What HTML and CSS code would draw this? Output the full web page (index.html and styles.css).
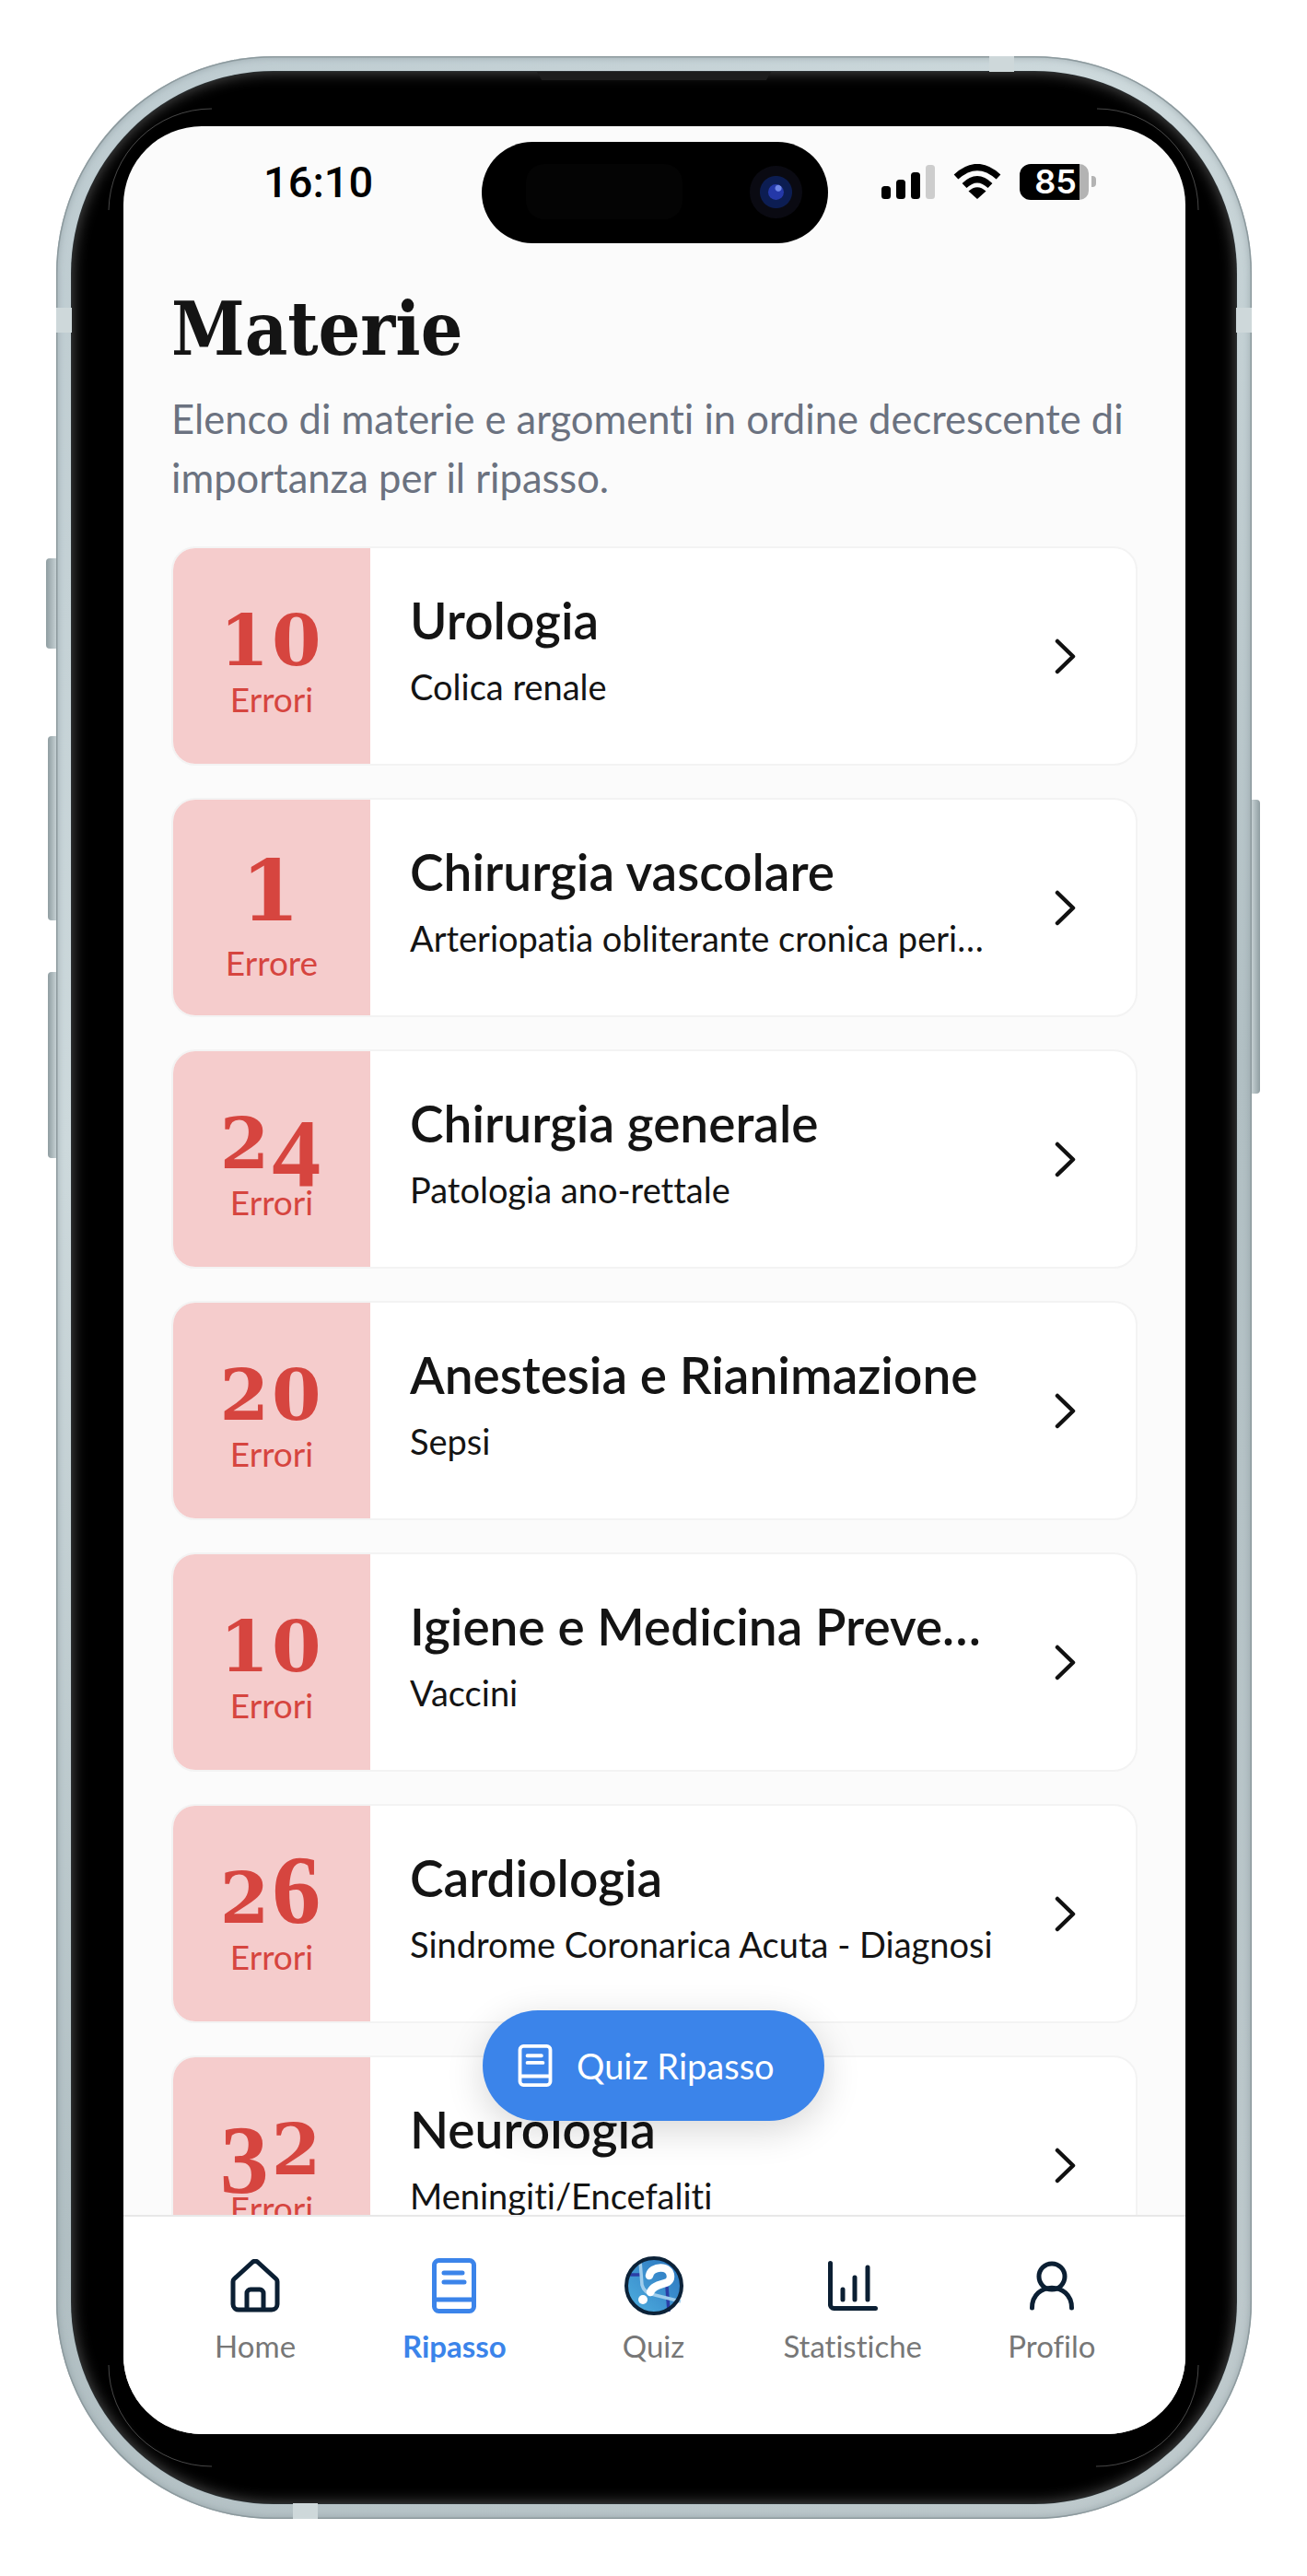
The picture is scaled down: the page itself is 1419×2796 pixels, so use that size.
FILE: index.html
```html
<!DOCTYPE html>
<html lang="it">
<head>
    <meta charset="UTF-8">
    <meta name="viewport" content="width=device-width, initial-scale=1.0">
    <title>Materie</title>
    <link rel="stylesheet" href="styles.css">
</head>
<body>
    <svg class="defs" width="0" height="0">
        <symbol id="book" viewBox="0 0 48 60">
            <rect x="2.5" y="2.5" width="43" height="55" rx="5" fill="none" stroke="currentColor" stroke-width="5"/>
            <path d="M3 45H45M13 16H33M13 26H35" fill="none" stroke="currentColor" stroke-width="5" stroke-linecap="round"/>
        </symbol>
        <symbol id="chevron" viewBox="0 0 23 39">
            <path d="M3 3L20 19.5L3 36" fill="none" stroke="#111" stroke-width="4.5" stroke-linecap="round" stroke-linejoin="round"/>
        </symbol>
    </svg>

    <div class="phone">
        <span class="btn btn-mute"></span>
        <span class="btn btn-up"></span>
        <span class="btn btn-down"></span>
        <span class="btn btn-power"></span>
        <span class="band band-top"></span>
        <span class="band band-bottom"></span>
        <span class="band band-left"></span>
        <span class="band band-right"></span>
        <span class="speaker"></span>
        <svg class="hairlines" viewBox="0 0 1298 2673">
            <path d="M57 167A112 112 0 0 1 169 57M1130 57A110 110 0 0 1 1240 167M1240 2506A110 110 0 0 1 1129 2616M169 2616A112 110 0 0 1 57 2506" fill="none" stroke="rgba(255,255,255,.28)" stroke-width="1"/>
        </svg>

        <div class="bezel">
            <div class="screen">
                <div class="island">
                    <span class="sensor"></span>
                    <span class="camera"><i></i></span>
                </div>

                <div class="statusbar">
                    <span class="time">16:10</span>
                    <div class="status-icons">
                        <svg width="58" height="37" viewBox="0 0 58 37">
                            <rect x="0" y="23" width="10" height="14" rx="3.5"/>
                            <rect x="16" y="16" width="10" height="21" rx="3.5"/>
                            <rect x="32" y="8" width="10" height="29" rx="3.5"/>
                            <rect x="48" y="0" width="10" height="37" rx="3.5" fill="#cdcdcd"/>
                        </svg>
                        <svg width="52" height="38" viewBox="0 0 52 38">
                            <path d="M3 14Q26 -7 49 14" fill="none" stroke="#000" stroke-width="7"/>
                            <path d="M12 23.5Q26 10 40 23.5" fill="none" stroke="#000" stroke-width="7"/>
                            <path d="M26 38L16.5 29.5Q26 21 35.5 29.5Z"/>
                        </svg>
                        <div class="battery">
                            <span class="battery-level">85</span>
                            <span class="battery-rest"></span>
                            <span class="battery-cap"></span>
                        </div>
                    </div>
                </div>

                <main class="content">
                    <h1>Materie</h1>
                    <p class="intro">Elenco di materie e argomenti in ordine decrescente di importanza per il ripasso.</p>

                    <div class="card">
                        <div class="count">
                            <div class="num"><span>1</span><span>0</span></div>
                            <div class="count-label">Errori</div>
                        </div>
                        <div class="info">
                            <div class="info-title">Urologia</div>
                            <div class="info-sub">Colica renale</div>
                        </div>
                        <svg class="chevron"><use href="#chevron"/></svg>
                    </div>

                    <div class="card">
                        <div class="count single">
                            <div class="num"><span>1</span></div>
                            <div class="count-label">Errore</div>
                        </div>
                        <div class="info">
                            <div class="info-title">Chirurgia vascolare</div>
                            <div class="info-sub">Arteriopatia obliterante cronica periferica</div>
                        </div>
                        <svg class="chevron"><use href="#chevron"/></svg>
                    </div>

                    <div class="card">
                        <div class="count">
                            <div class="num"><span>2</span><span class="low">4</span></div>
                            <div class="count-label">Errori</div>
                        </div>
                        <div class="info">
                            <div class="info-title">Chirurgia generale</div>
                            <div class="info-sub">Patologia ano-rettale</div>
                        </div>
                        <svg class="chevron"><use href="#chevron"/></svg>
                    </div>

                    <div class="card">
                        <div class="count">
                            <div class="num"><span>2</span><span>0</span></div>
                            <div class="count-label">Errori</div>
                        </div>
                        <div class="info">
                            <div class="info-title">Anestesia e Rianimazione</div>
                            <div class="info-sub">Sepsi</div>
                        </div>
                        <svg class="chevron"><use href="#chevron"/></svg>
                    </div>

                    <div class="card">
                        <div class="count">
                            <div class="num"><span>1</span><span>0</span></div>
                            <div class="count-label">Errori</div>
                        </div>
                        <div class="info">
                            <div class="info-title">Igiene e Medicina Preventiva</div>
                            <div class="info-sub">Vaccini</div>
                        </div>
                        <svg class="chevron"><use href="#chevron"/></svg>
                    </div>

                    <div class="card">
                        <div class="count">
                            <div class="num"><span>2</span><span class="high">6</span></div>
                            <div class="count-label">Errori</div>
                        </div>
                        <div class="info">
                            <div class="info-title">Cardiologia</div>
                            <div class="info-sub">Sindrome Coronarica Acuta - Diagnosi</div>
                        </div>
                        <svg class="chevron"><use href="#chevron"/></svg>
                    </div>

                    <div class="card">
                        <div class="count">
                            <div class="num"><span class="low">3</span><span>2</span></div>
                            <div class="count-label">Errori</div>
                        </div>
                        <div class="info">
                            <div class="info-title">Neurologia</div>
                            <div class="info-sub">Meningiti/Encefaliti</div>
                        </div>
                        <svg class="chevron"><use href="#chevron"/></svg>
                    </div>
                </main>

                <button class="fab">
                    <svg class="fab-icon"><use href="#book"/></svg>
                    <span>Quiz Ripasso</span>
                </button>

                <nav class="tabbar">
                    <div class="tab">
                        <div class="tab-icon">
                            <svg width="54" height="58" viewBox="0 0 54 58" fill="none" stroke="#0b1f33" stroke-width="5" stroke-linejoin="round">
                                <path d="M3 24.5a4 4 0 0 1 1.3-3L24 3.5a4 4 0 0 1 6 0L49.7 21.5a4 4 0 0 1 1.3 3V49a6 6 0 0 1-6 6H9a6 6 0 0 1-6-6Z"/>
                                <path d="M18 55V37a4 4 0 0 1 4-4h10a4 4 0 0 1 4 4V55"/>
                            </svg>
                        </div>
                        <span>Home</span>
                    </div>
                    <div class="tab active">
                        <div class="tab-icon">
                            <svg class="tab-book"><use href="#book"/></svg>
                        </div>
                        <span>Ripasso</span>
                    </div>
                    <div class="tab">
                        <div class="tab-icon">
                            <svg width="66" height="66" viewBox="0 0 66 66">
                                <defs>
                                    <linearGradient id="quizfill" x1="0" y1="1" x2="1" y2="0">
                                        <stop offset="0" stop-color="#4fb0e0"/>
                                        <stop offset="1" stop-color="#2a72bd"/>
                                    </linearGradient>
                                </defs>
                                <circle cx="33" cy="33" r="30" fill="url(#quizfill)"/>
                                <path d="M6 21H20M47 34L49 61" fill="none" stroke="#2b3fa6" stroke-width="3.5"/>
                                <path d="M18 6L20 32Q22 41 34 43L62 50" fill="none" stroke="#9fcdec" stroke-width="3.5"/>
                                <path d="M28 22C30 11 51 10 51 23C51 34 34 28 29 40" fill="none" stroke="#fff" stroke-width="8.5" stroke-linecap="round"/>
                                <circle cx="21" cy="48" r="5" fill="#fff"/>
                                <circle cx="33" cy="33" r="30" fill="none" stroke="#0c2238" stroke-width="4"/>
                            </svg>
                        </div>
                        <span>Quiz</span>
                    </div>
                    <div class="tab">
                        <div class="tab-icon">
                            <svg width="54" height="54" viewBox="0 0 54 54" fill="none" stroke="#0b1f33" stroke-linecap="round">
                                <path d="M2.5 2.5V47a4 4 0 0 0 4 4.5H51.5" stroke-width="5" stroke-linejoin="round"/>
                                <path d="M16 31V42M29 18V42M43 7V42" stroke-width="5"/>
                            </svg>
                        </div>
                        <span>Statistiche</span>
                    </div>
                    <div class="tab">
                        <div class="tab-icon">
                            <svg width="48" height="54" viewBox="0 0 48 54" fill="none" stroke="#0b1f33" stroke-width="5" stroke-linecap="round">
                                <circle cx="24" cy="17" r="14"/>
                                <path d="M2.5 51C2.5 22 45.5 22 45.5 51"/>
                            </svg>
                        </div>
                        <span>Profilo</span>
                    </div>
                </nav>
            </div>
        </div>
    </div>
</body>
</html>
```

FILE: styles.css
```css
* { box-sizing: border-box; }
html, body { margin: 0; height: 100%; overflow: hidden; background: #fff; }
body { padding: 61px 0 0 61px; font-family: "Lato", "Noto Sans", sans-serif; font-variant-ligatures: none; color: #141414; }
.defs { display: block; }

/* device frame */
.phone { position: relative; width: 1298px; height: 2673px; padding: 17px; border-radius: 236px; background: linear-gradient(135deg, #bccacf, #cdd9dc 30%, #b1bfc3 60%, #bfcacd); box-shadow: inset 0 0 0 1.5px #8d9a9e, inset 0 0 6px 3px rgba(120,135,140,.35); }
.bezel { height: 100%; padding: 59px 55px 75px 56px; border-radius: 219px; background: #000; box-shadow: 0 0 0 1px #2a2f31, inset 0 0 16px rgba(150,150,150,.55); }
.screen { position: relative; display: flex; flex-direction: column; height: 100%; overflow: hidden; border-radius: 85px; background: #fbfbfb; }
.hairlines { position: absolute; top: 0; left: 0; width: 1298px; height: 2673px; z-index: 2; pointer-events: none; }
.btn { position: absolute; background: linear-gradient(90deg, #8f9da1, #c5d0d3); }
.btn-mute { left: -11px; top: 545px; width: 11px; height: 98px; border-radius: 4px 0 0 4px; }
.btn-up { left: -9px; top: 738px; width: 9px; height: 200px; border-radius: 4px 0 0 4px; }
.btn-down { left: -9px; top: 994px; width: 9px; height: 202px; border-radius: 4px 0 0 4px; }
.btn-power { right: -9px; top: 807px; width: 9px; height: 319px; border-radius: 0 4px 4px 0; background: linear-gradient(90deg, #c5d0d3, #8f9da1); }
.band { position: absolute; background: #ced8da; }
.band-top { left: 1013px; top: 0; width: 27px; height: 17px; }
.band-bottom { left: 257px; bottom: 0; width: 27px; height: 17px; }
.band-left { left: 0; top: 273px; width: 17px; height: 27px; }
.band-right { right: 0; top: 273px; width: 17px; height: 27px; }
.speaker { position: absolute; left: 522px; top: 17px; width: 254px; height: 9px; background: #1d1d1d; clip-path: polygon(0 0, 100% 0, 98% 100%, 2% 100%); z-index: 1; }

/* status bar */
.island { position: absolute; left: 389px; top: 17px; width: 376px; height: 110px; border-radius: 55px; background: #000; z-index: 3; }
.sensor { position: absolute; left: 48px; top: 24px; width: 170px; height: 60px; border-radius: 20px; background: #040404; }
.camera { position: absolute; left: 291px; top: 26px; width: 57px; height: 57px; border-radius: 50%; background: radial-gradient(circle, #0c1d52 0, #0c1d52 17px, #0a0a12 18px); }
.camera i { position: absolute; left: 20px; top: 20px; width: 17px; height: 17px; border-radius: 50%; background: radial-gradient(circle at 65% 25%, #6f86e6 0, #6f86e6 3px, #2438a8 4px); }
.statusbar { display: flex; align-items: center; justify-content: space-between; flex: none; height: 120px; padding: 0 97px 0 152px; }
.time { font-family: "Roboto", sans-serif; font-weight: 500; font-size: 47px; color: #000; }
.status-icons { display: flex; align-items: center; gap: 20px; }
.status-icons svg { display: block; }
.battery { display: flex; align-items: center; width: 83px; height: 39px; }
.battery-level { width: 65px; height: 39px; border-radius: 12px 0 0 12px; background: #000; color: #fff; font-family: "Inter", sans-serif; font-weight: 600; font-size: 36px; line-height: 39px; text-align: right; padding-right: 3px; }
.battery-rest { width: 10px; height: 39px; border-radius: 0 12px 12px 0; background: #b3b3b3; }
.battery-cap { width: 5px; height: 12px; margin-left: 3px; border-radius: 0 4px 4px 0; background: #b3b3b3; }

/* page */
.content { flex: 1; min-height: 0; overflow: hidden; padding: 0 52px; }
h1 { margin: 55px 0 0; font-family: "DejaVu Serif Condensed", "DejaVu Serif", serif; font-stretch: condensed; font-weight: 700; font-size: 80px; line-height: 90px; color: #141414; }
.intro { margin: 20px 0 43px; font-size: 43.5px; line-height: 64px; color: #6b7280; }

.card { display: flex; align-items: flex-start; height: 238px; margin-bottom: 35px; overflow: hidden; border: 2px solid #f3f3f3; border-radius: 26px; background: #fff; }
.count { flex: none; width: 214px; height: 100%; padding-top: 60px; background: #f5cccc; color: #d6453f; text-align: center; }
.num { height: 80px; font-family: "DejaVu Serif", serif; font-weight: 700; font-size: 77px; line-height: 80px; letter-spacing: 3px; white-space: nowrap; }
.num .low, .num .high { font-family: "Liberation Serif", serif; font-size: 106px; line-height: 0; }
.num .low { vertical-align: -20px; }
.count-label { margin-top: 4px; font-size: 37px; line-height: 40px; }
.count.single { padding-top: 49px; }
.count.single .num { height: 100px; font-size: 92px; line-height: 100px; }
.count.single .count-label { margin-top: 8px; }
.info { flex: 1; min-width: 0; padding: 46px 0 0 43px; margin-right: 66px; }
.info-title { font-size: 55px; font-weight: 600; line-height: 64px; white-space: nowrap; overflow: hidden; text-overflow: ellipsis; color: #141414; }
.info-sub { margin-top: 16px; font-size: 38px; line-height: 48px; white-space: nowrap; overflow: hidden; text-overflow: ellipsis; color: #141414; }
.chevron { flex: none; align-self: center; width: 23px; height: 39px; margin-right: 65px; }

/* floating button */
.fab { position: absolute; left: 390px; top: 2045px; display: flex; align-items: center; gap: 26px; width: 371px; height: 120px; padding: 0 0 0 38px; border: 0; border-radius: 60px; background: #3b84ea; color: #fff; font-family: "Lato", sans-serif; font-size: 38px; box-shadow: 0 10px 40px rgba(0,0,0,.16); z-index: 2; }
.fab-icon { width: 38px; height: 46px; }

/* bottom tabs */
.tabbar { display: flex; flex: none; height: 238px; padding: 40px 37px 0 35px; border-top: 2px solid #e8e8e8; background: #fff; }
.tab { flex: 1; display: flex; flex-direction: column; align-items: center; font-size: 33px; line-height: 40px; color: #777; }
.tab-icon { display: flex; align-items: center; justify-content: center; height: 70px; margin-bottom: 10px; }
.tab.active { color: #3b84ea; font-weight: 700; }
.tab-book { width: 48px; height: 60px; color: #3b84ea; }
```
